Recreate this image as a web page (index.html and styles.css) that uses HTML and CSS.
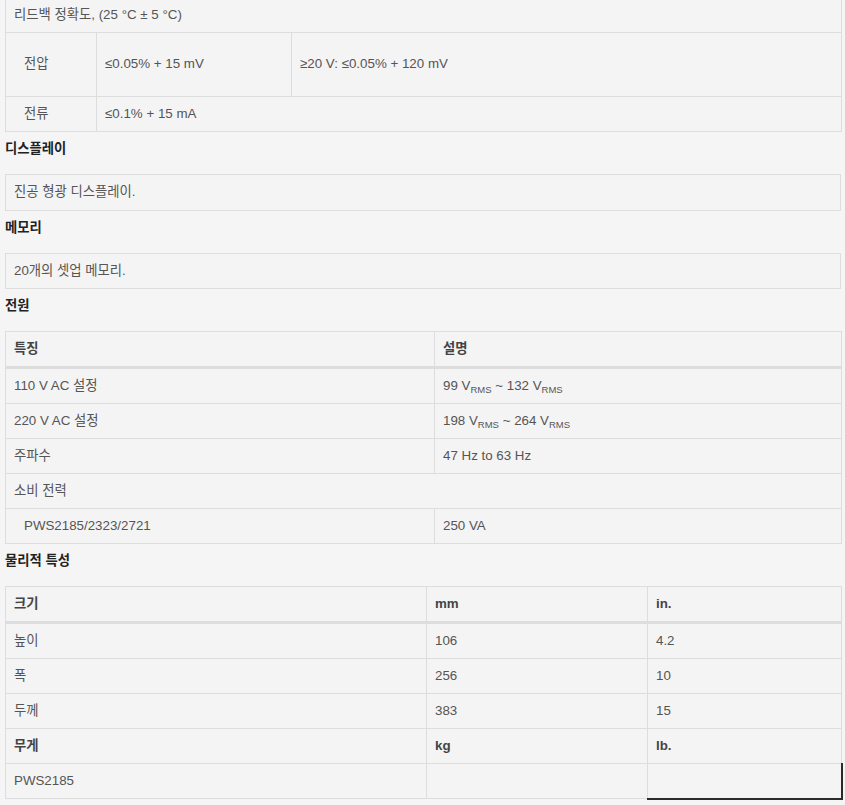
FILE: index.html
```html
<!DOCTYPE html>
<html lang="ko">
<head>
	<meta charset="utf-8">
	<title>PWS2000 사양</title>
	<link rel="stylesheet" href="styles.css">
</head>
<body>
	<div class="specs">
		<!-- readback accuracy, top of the table is scrolled away -->
		<table class="spec-table first">
			<colgroup>
				<col style="width: 91px">
				<col style="width: 195px">
				<col style="width: 550px">
			</colgroup>
			<tbody>
				<tr>
					<td colspan="3">리드백 정확도, (25 °C ± 5 °C)</td>
				</tr>
				<tr class="tall">
					<td class="indent">전압</td>
					<td>≤0.05% + 15 mV</td>
					<td>≥20 V: ≤0.05% + 120 mV</td>
				</tr>
				<tr>
					<td class="indent">전류</td>
					<td colspan="2">≤0.1% + 15 mA</td>
				</tr>
			</tbody>
		</table>

		<h4 class="section-title">디스플레이</h4>
		<div class="note-box">진공 형광 디스플레이.</div>

		<h4 class="section-title">메모리</h4>
		<div class="note-box">20개의 셋업 메모리.</div>

		<h4 class="section-title">전원</h4>
		<table class="spec-table">
			<colgroup>
				<col style="width: 429px">
				<col style="width: 407px">
			</colgroup>
			<thead>
				<tr>
					<th>특징</th>
					<th>설명</th>
				</tr>
			</thead>
			<tbody>
				<tr>
					<td>110 V AC 설정</td>
					<td>99 V<sub>RMS</sub> ~ 132 V<sub>RMS</sub></td>
				</tr>
				<tr>
					<td>220 V AC 설정</td>
					<td>198 V<sub>RMS</sub> ~ 264 V<sub>RMS</sub></td>
				</tr>
				<tr>
					<td>주파수</td>
					<td>47 Hz to 63 Hz</td>
				</tr>
				<tr>
					<td colspan="2">소비 전력</td>
				</tr>
				<tr>
					<td class="indent">PWS2185/2323/2721</td>
					<td>250 VA</td>
				</tr>
			</tbody>
		</table>

		<h4 class="section-title">물리적 특성</h4>
		<table class="spec-table">
			<colgroup>
				<col style="width: 421px">
				<col style="width: 221px">
				<col style="width: 194px">
			</colgroup>
			<thead>
				<tr>
					<th>크기</th>
					<th>mm</th>
					<th>in.</th>
				</tr>
			</thead>
			<tbody>
				<tr>
					<td>높이</td>
					<td>106</td>
					<td>4.2</td>
				</tr>
				<tr>
					<td>폭</td>
					<td>256</td>
					<td>10</td>
				</tr>
				<tr>
					<td>두께</td>
					<td>383</td>
					<td>15</td>
				</tr>
				<tr class="sub-head">
					<td>무게</td>
					<td>kg</td>
					<td>lb.</td>
				</tr>
				<tr>
					<td>PWS2185</td>
					<td></td>
					<td class="selected"></td>
				</tr>
			</tbody>
		</table>
	</div>
</body>
</html>
```

FILE: styles.css
```css
body {
	margin: 0;
	background-color: #f5f5f5;
	font-family: "Liberation Sans", Arial, "Noto Sans CJK KR", sans-serif;
	font-size: 13.33px;
	color: #555;
}
.specs {
	width: 836px;
	margin: -3px 0 0 5px;
}

/* tables */
.spec-table {
	width: 836px;
	table-layout: fixed;
	border-collapse: collapse;
	background-color: #f4f4f4;
}
.spec-table th,
.spec-table td {
	border: 1px solid #ddd;
	padding: 8px 8px;
	line-height: 18px;
	text-align: left;
	vertical-align: middle;
}
.spec-table th {
	font-weight: bold;
	color: #444;
	border-bottom: 3px solid #ddd;
}
.spec-table .indent {
	padding-left: 18px;
}
.spec-table .tall td {
	padding-top: 22px;
	padding-bottom: 23px;
}
.spec-table .sub-head td {
	font-weight: bold;
	color: #444;
}
.spec-table .selected {
	border-right: 2px solid #2b2b2b;
	border-bottom: 2px solid #2b2b2b;
}
sub {
	font-size: 9.5px;
	line-height: 0;
	vertical-align: -3px;
}

/* section headings + single note boxes */
.section-title {
	margin: 0;
	padding-top: 7px;
	margin-bottom: 15px;
	font-size: 13.33px;
	line-height: 20px;
	color: #222;
}
.note-box {
	border: 1px solid #ddd;
	background-color: #f4f4f4;
	padding: 8px 8px 8.5px;
	line-height: 18px;
}
```
